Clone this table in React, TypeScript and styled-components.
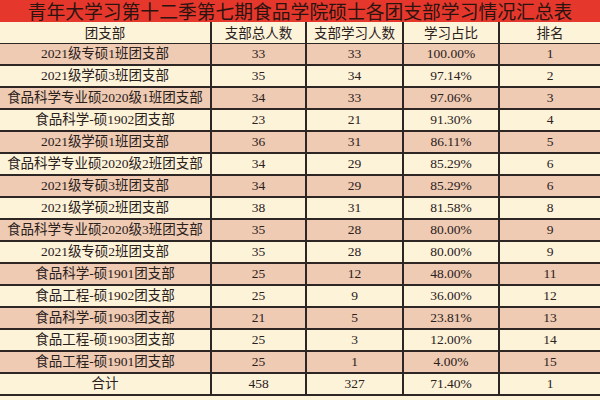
import React from "react";
import styled, { createGlobalStyle } from "styled-components";

const Global = createGlobalStyle`
  html, body { margin: 0; padding: 0; background: #fdf3d8; }
  body { width: 600px; height: 400px; overflow: hidden; }
`;

const Sheet = styled.div`
  display: grid;
  grid-template-columns: 210px 93px 95px 94px 1fr;
  grid-auto-rows: 20px;
  gap: 2px;
  background: #2e2624;
  width: 600px;
  padding-bottom: 2px;
  font-family: "Liberation Serif", "Noto Sans CJK SC", serif;
  color: #2a201c;
`;

const Title = styled.div`
  grid-column: 1 / -1;
  height: 22px;
  background: #e6372c;
  text-align: center;
  font-family: "Noto Sans CJK SC", sans-serif;
  font-size: 18.8px;
  line-height: 22px;
  color: #2b1410;
  white-space: nowrap;
`;

const Head = styled.div`
  height: 21px;
  background: #fdf3d8;
  text-align: center;
  font-family: "Noto Sans CJK SC", sans-serif;
  font-size: 13.5px;
  line-height: 21px;
  color: #2a201c;
`;

const Cell = styled.div<{ $pink: boolean }>`
  background: ${(p) => (p.$pink ? "#eecbb2" : "#fdf3d8")};
  text-align: center;
  font-size: 13.5px;
  line-height: 20px;
  white-space: nowrap;
`;

const rows: [string, number, number, string, number][] = [
  ["2021级专硕1班团支部", 33, 33, "100.00%", 1],
  ["2021级学硕3班团支部", 35, 34, "97.14%", 2],
  ["食品科学专业硕2020级1班团支部", 34, 33, "97.06%", 3],
  ["食品科学-硕1902团支部", 23, 21, "91.30%", 4],
  ["2021级学硕1班团支部", 36, 31, "86.11%", 5],
  ["食品科学专业硕2020级2班团支部", 34, 29, "85.29%", 6],
  ["2021级专硕3班团支部", 34, 29, "85.29%", 6],
  ["2021级学硕2班团支部", 38, 31, "81.58%", 8],
  ["食品科学专业硕2020级3班团支部", 35, 28, "80.00%", 9],
  ["2021级专硕2班团支部", 35, 28, "80.00%", 9],
  ["食品科学-硕1901团支部", 25, 12, "48.00%", 11],
  ["食品工程-硕1902团支部", 25, 9, "36.00%", 12],
  ["食品科学-硕1903团支部", 21, 5, "23.81%", 13],
  ["食品工程-硕1903团支部", 25, 3, "12.00%", 14],
  ["食品工程-硕1901团支部", 25, 1, "4.00%", 15],
  ["合计", 458, 327, "71.40%", 1],
];

const headers = ["团支部", "支部总人数", "支部学习人数", "学习占比", "排名"];

export default function App() {
  return (
    <>
      <Global />
      <Sheet>
        <Title>青年大学习第十二季第七期食品学院硕士各团支部学习情况汇总表</Title>
        {headers.map((h) => (
          <Head key={h}>{h}</Head>
        ))}
        {rows.map((r, i) => {
          const pink = i % 2 === 0 && i < 15;
          return r.map((v, j) => (
            <Cell key={`${i}-${j}`} $pink={pink}>
              {v}
            </Cell>
          ));
        })}
      </Sheet>
    </>
  );
}
